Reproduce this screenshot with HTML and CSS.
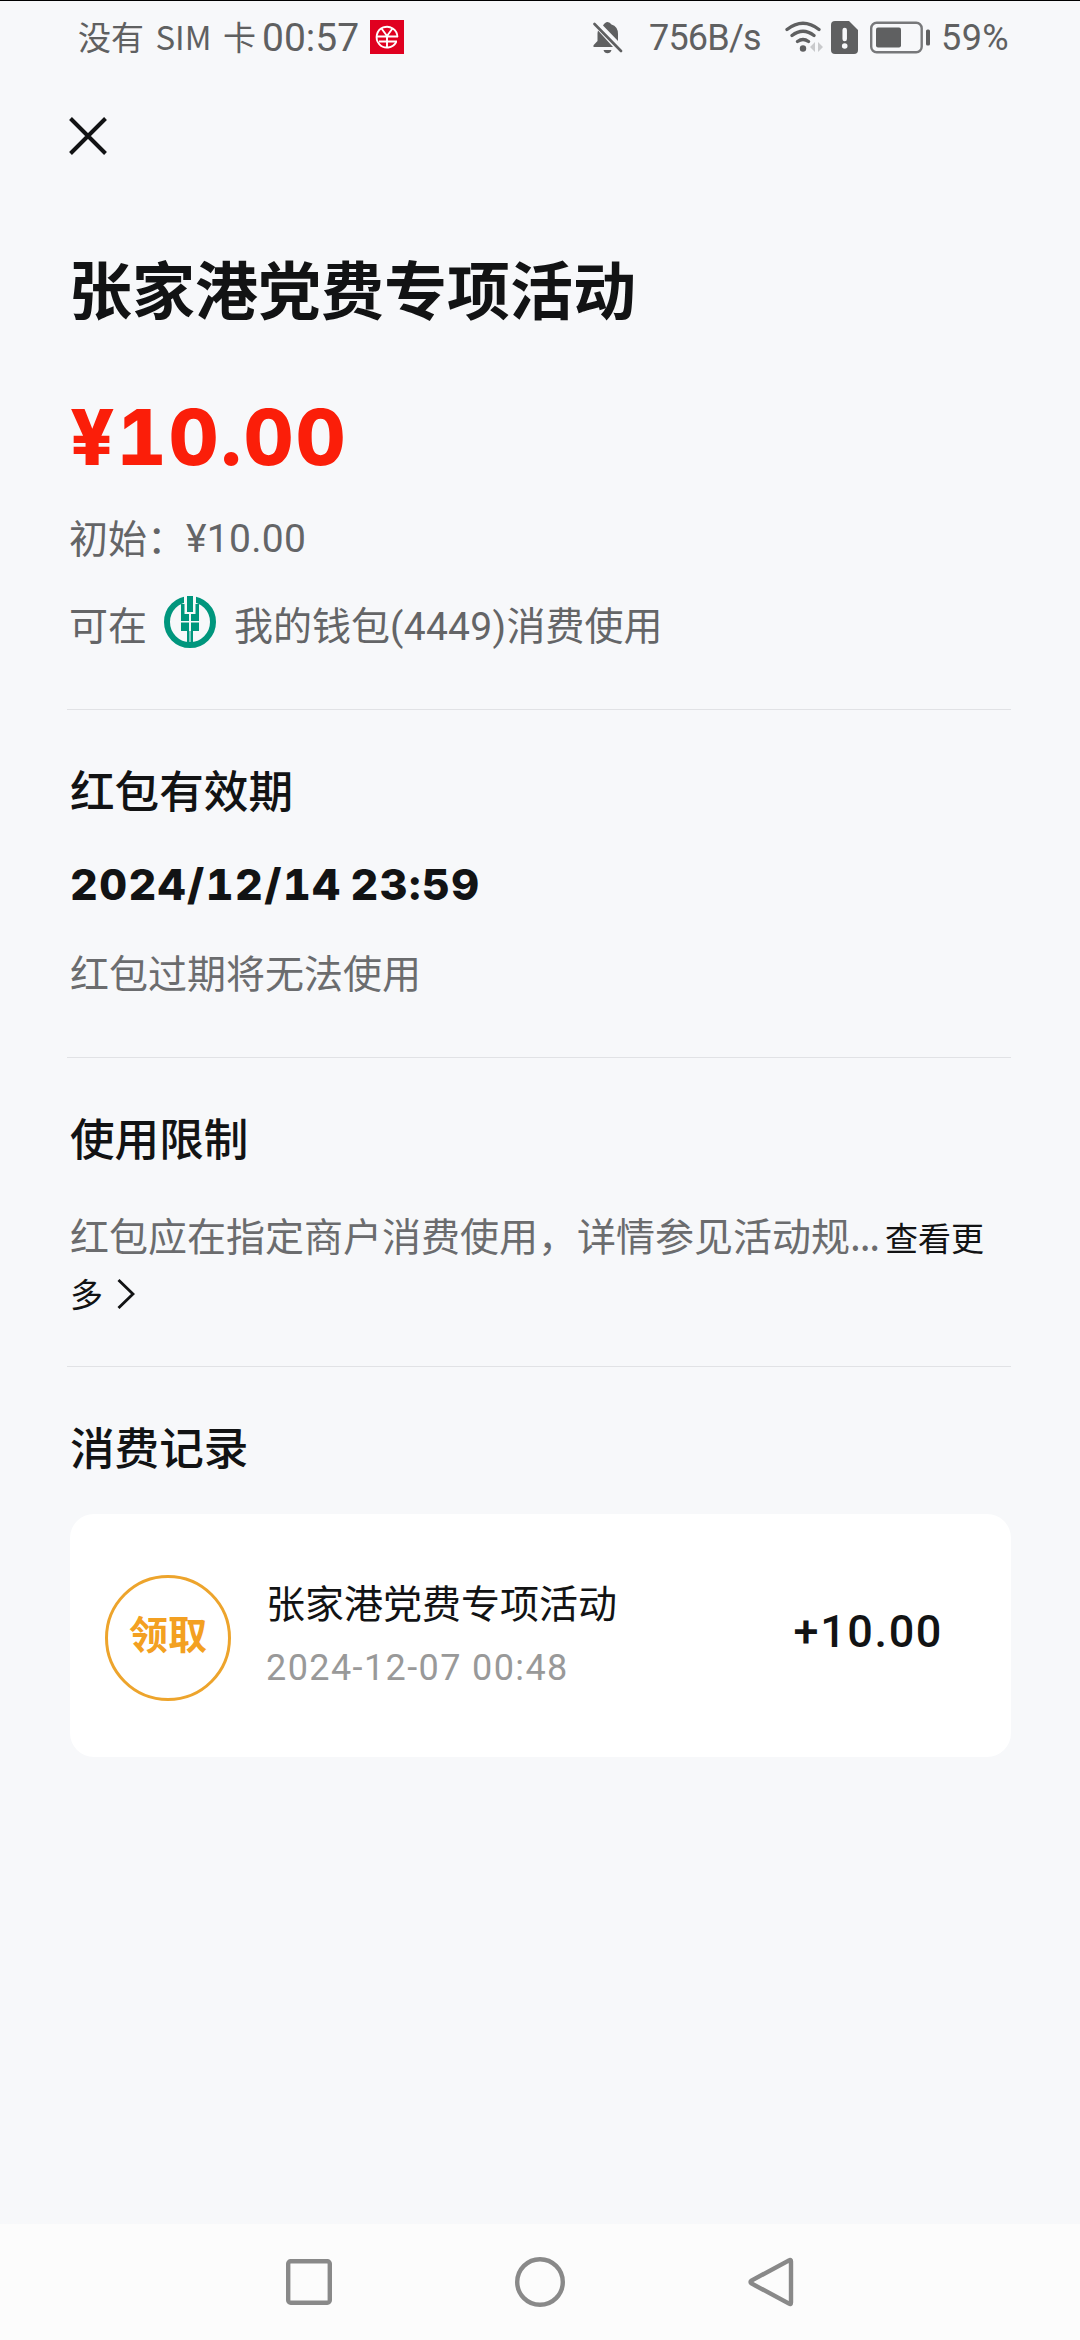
FILE: index.html
```html
<!DOCTYPE html>
<html lang="zh-CN">
<head>
<meta charset="utf-8">
<title>红包详情</title>
<link rel="stylesheet" href="styles.css">
</head>
<body>
<header class="status">
  <span class="carrier">没有 SIM 卡</span>
  <span class="clock">00:57</span>
  <svg class="app-badge" viewBox="0 0 34 34"><path fill="#e00020" d="M0 0h34v34H0z"/><g fill="none" stroke="#fff" stroke-width="1.9"><path d="M27.4 17a10.4 10.4 0 1 0-1.200 5"/><path d="M11.500 8.500l5.500 7.500 5.500-7.500M7 16.500h21M9 21.500h18M17 16v11"/></g></svg>
  <svg class="bell" viewBox="0 0 30 33"><g fill="#5f6061"><path d="M10 4.500Q12 1 14.500 1t4 2.500q6.500 2 6.500 9.500V20z"/><path d="M5 9.500L20 26H.5v-1.800L4.500 20v-8z"/><path d="M10.500 29h8q-1 3.200-4 3.200t-4-3.200z"/></g><path d="M1.500 3L28 30" stroke="#5f6061" stroke-width="2.600" stroke-linecap="round"/></svg>
  <span class="speed">756B/s</span>
  <svg class="wifi" viewBox="0 0 40 34"><g fill="none" stroke="#5f6061" stroke-width="3.300" stroke-linecap="round"><path d="M2 9.500Q18 -3 34 9.500M7 15.500Q18 7 29 15.500M12.500 21.500Q18 17.500 23.500 21.500"/></g><circle cx="18" cy="28.500" r="3.200" fill="#5f6061"/><path d="M30 22v10l-5-5zM33 22v10l5-5z" fill="#c9cacc"/></svg>
  <svg class="sim" viewBox="0 0 27 34"><path fill="#5f6061" d="M4 1h14l9 9v20q0 4-4 4H4q-4 0-4-4V5q0-4 4-4z"/><path d="M13.700 10v9" stroke="#f7f8fa" stroke-width="4.500" stroke-linecap="round"/><circle cx="13.700" cy="26" r="2.800" fill="#f7f8fa"/></svg>
  <svg class="battery" viewBox="0 0 60 33"><rect x="1.200" y="1.700" width="50.500" height="29.600" rx="5.500" fill="none" stroke="#77787a" stroke-width="2.400"/><rect x="6" y="6.500" width="25" height="20" rx="2" fill="#5f6061"/><rect x="56" y="8.500" width="4" height="16" rx="1.500" fill="#5f6061"/></svg>
  <span class="percent">59%</span>
</header>
<main>
  <svg class="close" viewBox="0 0 38 38"><path d="M1.500 1.500l35 35m0-35l-35 35" stroke="#121314" stroke-width="4"/></svg>
  <h1>张家港党费专项活动</h1>
  <div class="price">¥10.00</div>
  <div class="line initial"><span>初始：</span><span class="num">¥10.00</span></div>
  <div class="line wallet"><span>可在</span>
    <svg class="bank" viewBox="0 0 52 52"><circle cx="26" cy="26" r="23" fill="none" stroke="#00967d" stroke-width="6"/><path fill="#f7f8fa" d="M20 0h12v18H20z"/><path fill="#00967d" d="M23 0h6v16h-6zM17 8h3.500v10H25v7h-8zM35 8h-3.500v10H27v7h8zM17 26.500h8V35h-8zM27 26.500h8V35h-8zM23 35h2.500v15H23zM26.500 35H29v15h-2.500z"/></svg>
    <span>我的钱包<span class="num">(4449)</span>消费使用</span></div>
  <section class="validity">
    <h2>红包有效期</h2>
    <div class="deadline">2024/12/14 23:59</div>
    <p>红包过期将无法使用</p>
  </section>
  <section class="limits">
    <h2>使用限制</h2>
    <p>红包应在指定商户消费使用，详情参见活动规<span class="dots">...</span><a class="more">查看更多<svg class="chevron" viewBox="0 0 18 32"><path d="M1.500 2l14.500 14-14.500 14" fill="none" stroke="#121314" stroke-width="2.900"/></svg></a></p>
  </section>
  <section class="records">
    <h2>消费记录</h2>
    <article class="record">
      <div class="tag">领取</div>
      <div class="info"><div class="name">张家港党费专项活动</div><time>2024-12-07 00:48</time></div>
      <div class="amount">+10.00</div>
    </article>
  </section>
</main>
<nav>
  <svg viewBox="0 0 50 50"><rect x="4.200" y="4.200" width="41.600" height="41.600" rx="2.500"/></svg>
  <svg viewBox="0 0 50 50"><circle cx="25" cy="25" r="22.800"/></svg>
  <svg viewBox="0 0 50 50"><path d="M43 3.500Q45 2 45 4.500v41q0 2.500-2 1L5.500 26.500q-2-1.500 0-3z"/></svg>
</nav>
</body>
</html>
```
FILE: styles.css
```css
* { box-sizing: border-box; }
body {
  margin: 0;
  width: 1080px;
  height: 2340px;
  display: flex;
  flex-direction: column;
  background: #f7f8fa;
  color: #121314;
  font-family: "Noto Sans CJK SC", sans-serif;
  white-space: nowrap;
  overflow: hidden;
}
svg { display: block; flex: none; }
h1, h2, p { margin: 0; }
.status {
  height: 76px;
  border-top: 1px solid #000;
  padding: 0 0 3px 78px;
  display: flex;
  align-items: center;
  color: #5f6061;
}
.status span { line-height: 48px; flex: none; }
.status .carrier { width: 184px; font-size: 33px; line-height: 46px; word-spacing: 4px; padding-bottom: 2px; }
.clock { width: 108px; font-family: Roboto, sans-serif; font-size: 39px; }
.status .clock, .status .speed, .status .percent { padding-top: 2px; }
.app-badge { width: 34px; height: 34px; margin-right: 189px; }
.bell { width: 30px; height: 33px; margin-right: 26px; }
.speed { width: 136px; font-family: Roboto, sans-serif; font-size: 36px; letter-spacing: -0.8px; }
.wifi { width: 40px; height: 34px; margin-right: 6px; }
.sim { width: 27px; height: 34px; margin-right: 12px; }
.battery { width: 60px; height: 33px; margin-right: 11px; }
.percent { font-family: Roboto, sans-serif; font-size: 36px; letter-spacing: 0.4px; }
main { flex: 1; padding: 41px 69px 0 67px; display: flex; flex-direction: column; }
.close { width: 38px; height: 38px; margin-left: 2px; }
h1 { margin: 87px 0 0 2px; font-size: 63px; line-height: 90px; font-weight: 700; }
.price {
  margin: 60px 0 0 3px;
  font: 800 77px/90px Inter, sans-serif;
  font-variant-numeric: tabular-nums;
  letter-spacing: 2.3px;
  color: #fb1e09;
}
.line { height: 60px; display: flex; align-items: center; padding-left: 2px; font-size: 39px; color: #646567; }
.num { font-family: Roboto, sans-serif; letter-spacing: 0.3px; }
.initial { margin-top: 24px; }
.initial .num { padding-top: 5px; }
.wallet { margin-top: 27px; }
.bank { width: 52px; height: 52px; margin: -3px 18px 0 17px; }
section { border-top: 1px solid #e1e2e5; padding: 46px 0 0 3px; }
h2 { font-size: 44.600px; line-height: 66px; font-weight: 500; }
p { font-size: 39px; line-height: 56px; color: #6b6c6e; }
.validity { height: 348px; margin-top: 56px; }
.deadline {
  margin-top: 37px;
  font: 800 43px/50px Inter, sans-serif;
  font-variant-numeric: tabular-nums;
  letter-spacing: 1.5px;
  word-spacing: -4px;
}
.validity p { margin-top: 34px; }
.limits { height: 309px; }
.limits p { margin-top: 36px; white-space: normal; }
.dots { letter-spacing: -1.2px; margin-right: 6px; }
.more { font-size: 33px; line-height: 36px; color: #121314; }
.chevron { display: inline-block; width: 18px; height: 32px; margin-left: 14px; vertical-align: -3px; }
.record { width: 941px; height: 243px; margin-top: 35px; padding: 0 68px 0 35px; border-radius: 24px; background: #fff; display: flex; align-items: center; }
.tag { width: 126px; height: 126px; margin-top: 4px; border: 3px solid #eda42c; border-radius: 50%; color: #f3a021; font-size: 39px; line-height: 108px; font-weight: 700; text-align: center; }
.info { flex: 1; padding: 0 0 6px 35px; }
.name { font-size: 39px; line-height: 56px; }
time { display: block; font: 36px/50px Roboto, sans-serif; letter-spacing: 1.4px; color: #999; margin-top: 14px; }
.amount { font: 500 45px/60px Roboto, sans-serif; letter-spacing: 1.6px; padding-bottom: 8px; }
nav { height: 116px; background: #fcfcfc; display: flex; padding: 33px 0 0 284px; gap: 181px; }
nav svg { width: 50px; height: 50px; fill: none; stroke: #898989; stroke-width: 4.400; }
```
